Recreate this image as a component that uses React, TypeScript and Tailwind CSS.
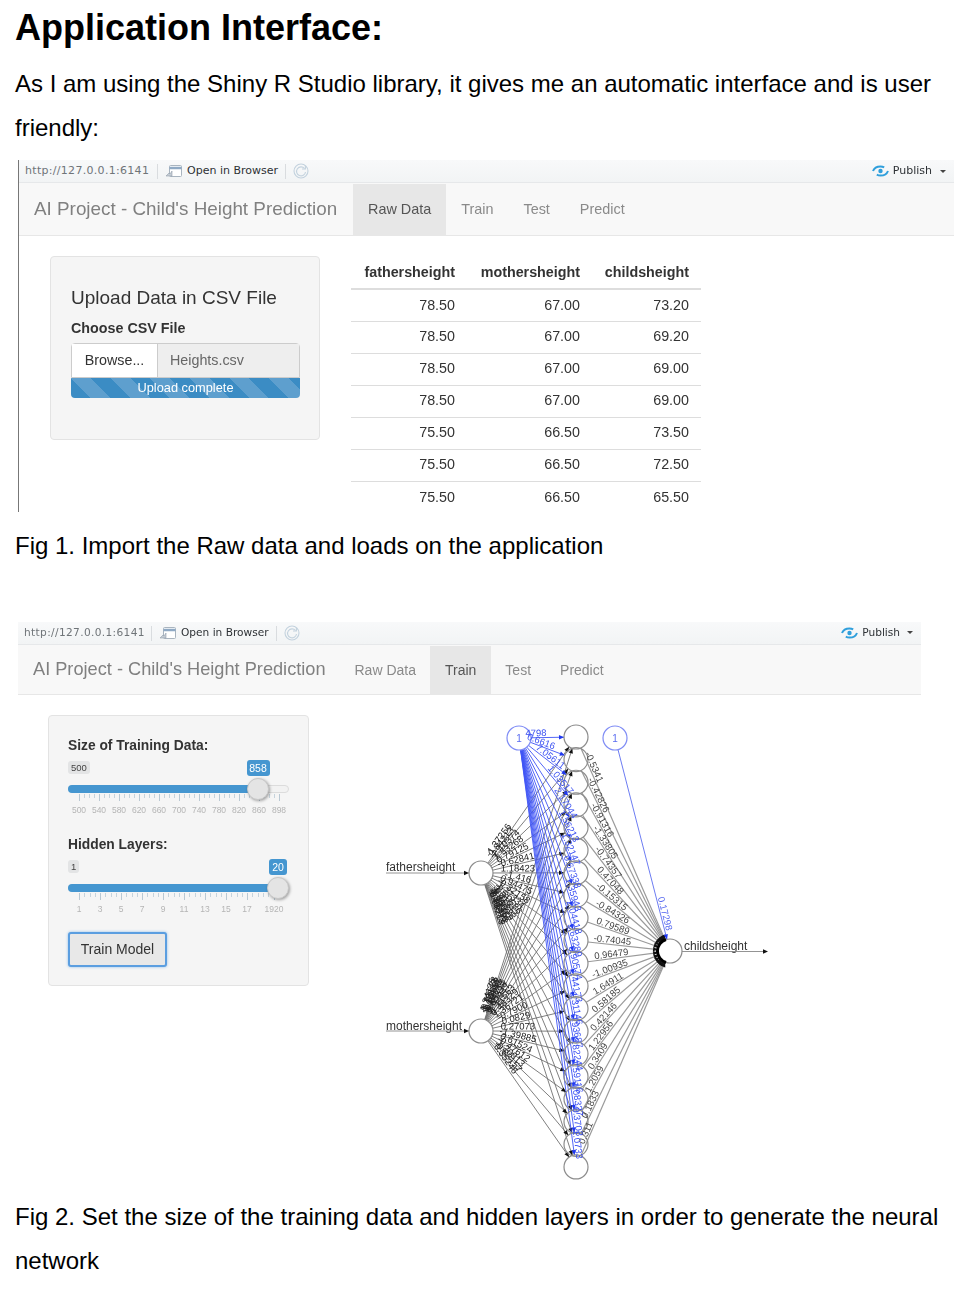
import React from 'react';

const tableRows = [
  ['78.50', '67.00', '73.20'],
  ['78.50', '67.00', '69.20'],
  ['78.50', '67.00', '69.00'],
  ['78.50', '67.00', '69.00'],
  ['75.50', '66.50', '73.50'],
  ['75.50', '66.50', '72.50'],
  ['75.50', '66.50', '65.50'],
];

function OpenIcon() {
  return (
    <svg width="18" height="14" viewBox="0 0 18 14" fill="none">
      <rect x="4.5" y="1.5" width="12" height="11" rx="1" fill="#fff" stroke="#a9b4bf" />
      <path d="M4.5 4h12" stroke="#8fa9c4" strokeWidth="2.5" />
      <path d="M1 12l3-3 1 1 2-3v5z" fill="#c4ccd4" stroke="#94a0ac" strokeWidth="0.6" />
    </svg>
  );
}

function RefreshIcon() {
  return (
    <svg width="16" height="16" viewBox="0 0 16 16" fill="none" stroke="#c3d2de" strokeWidth="1.1">
      <circle cx="8" cy="8" r="7" />
      <path d="M11.5 5.5A4.5 4.5 0 1 0 12.5 9" />
      <path d="M9 6h3.4V2.8" />
    </svg>
  );
}

function PublishIcon() {
  return (
    <svg width="17" height="12" viewBox="0 0 17 12" fill="none">
      <path d="M1 6c1-2.6 3.4-4.6 7.4-4.6 1.6 0 2.8.4 3.800 1" stroke="#2f9fdc" strokeWidth="2" />
      <path d="M16 6c-1 2.6-3.400 4.600-7.400 4.600-1.600 0-2.800-.4-3.800-1" stroke="#2f9fdc" strokeWidth="2" />
      <circle cx="8.500" cy="6" r="2.200" fill="#2f9fdc" />
    </svg>
  );
}

function Toolbar({ first }: { first: boolean }) {
  return (
    <div className={`flex h-[23px] items-center border-b border-[#e6e8ea] bg-gradient-to-b from-[#f8f9fa] to-[#f2f4f5] font-['DejaVu_Sans',sans-serif] whitespace-nowrap ${first ? 'pl-[6px] pr-[8px] text-[11px]' : 'pl-[6px] pr-[8px] text-[10.600px]'}`}>
      <span className={`text-[#6f7478] ${first ? 'w-[125px] tracking-[0.3px]' : 'w-[120px] tracking-[0.35px]'}`}>http://127.0.0.1:6141</span>
      <span className="ml-[7px] h-[15px] w-px bg-[#d9dcdf]" />
      <span className="ml-[7px]"><OpenIcon /></span>
      <span className={`ml-[4px] text-[#2d3135] ${first ? 'w-[90px]' : 'w-[87px]'}`}>Open in Browser</span>
      <span className="ml-[8px] h-[15px] w-px bg-[#d9dcdf]" />
      <span className="ml-[7px]"><RefreshIcon /></span>
      <div className="ml-auto flex items-center gap-1 text-[#2d3135]">
        <PublishIcon />
        <span>Publish</span>
        <span className={`h-0 w-0 border-x-[3px] border-t-[3px] border-x-transparent border-t-[#444] ${first ? 'ml-[4px]' : 'ml-[3px]'}`} />
      </div>
    </div>
  );
}

function NavBar({ active, first }: { active: string; first: boolean }) {
  const tabs = ['Raw Data', 'Train', 'Test', 'Predict'];
  return (
    <div className={`flex border-b border-[#e7e7e7] bg-[#f8f8f8] pt-px text-[#8a8a8a] ${first ? 'h-[53px] pl-[15px]' : 'h-[50px] pl-[15px]'}`}>
      <span className={`flex items-center whitespace-nowrap text-[#808080] ${first ? 'mr-[16px] w-[303px] text-[18.850px]' : 'mr-[15px] w-[292px] text-[18.200px]'}`}>AI Project - Child's Height Prediction</span>
      {tabs.map((tab) => (
        <span
          key={tab}
          className={`flex items-center ${first ? 'px-[15px] text-[14.400px]' : 'px-[14.500px] text-[14px]'} ${tab === active ? 'bg-[#e7e7e7] text-[#555]' : ''}`}
        >
          {tab}
        </span>
      ))}
    </div>
  );
}

function UploadPanel() {
  return (
    <div className="h-[184px] w-[270px] rounded border border-[#e3e3e3] bg-[#f5f5f5] px-5 pt-[28px] text-[#333]">
      <div className="text-[19px] leading-[26px]">Upload Data in CSV File</div>
      <div className="mt-[7px] text-[14.300px] leading-[20px] font-bold">Choose CSV File</div>
      <div className="mt-[5px] flex h-[35px] w-[229px] rounded-t border border-[#ccc] text-[14.300px]">
        <span className="flex w-[86px] items-center justify-center border-r border-[#ccc] bg-white">Browse...</span>
        <span className="flex flex-1 items-center bg-[#eee] pl-3 text-[#666]">Heights.csv</span>
      </div>
      <div className="flex h-[20px] w-[229px] items-center justify-center rounded-b bg-[repeating-linear-gradient(45deg,#3b8cc4_0_14px,#5e9fce_14px_28px)] text-[12.800px] text-white">
        Upload complete
      </div>
    </div>
  );
}

function DataTable() {
  return (
    <table className="ml-[31px] mt-[1px] h-fit w-[350px] border-collapse text-[14.300px] text-[#333]">
      <thead>
        <tr className="h-[32px] border-b-2 border-[#ddd]">
          <th className="w-[104px] pr-0 text-right font-bold">fathersheight</th>
          <th className="w-[125px] text-right font-bold">mothersheight</th>
          <th className="w-[109px] text-right font-bold">childsheight</th>
          <th />
        </tr>
      </thead>
      <tbody>
        {tableRows.map((row, i) => (
          <tr key={i} className={`h-[32px] ${i < tableRows.length - 1 ? 'border-b border-[#ddd]' : ''}`}>
            {row.map((cell, j) => (
              <td key={j} className="text-right">{cell}</td>
            ))}
            <td />
          </tr>
        ))}
      </tbody>
    </table>
  );
}

function Slider({ label, min, value, thumbX, labels, minor, valueW }: {
  label: string;
  min: string;
  value: string;
  thumbX: number;
  labels: { t: string; x: number }[];
  minor: number[];
  valueW: number;
}) {
  return (
    <div>
      <div className="text-[13.800px] leading-[20px] font-bold text-[#333]">{label}</div>
      <div className="relative mt-[3px] h-[72px] w-[221px]">
        <span className="absolute left-0 top-[2px] rounded-[3px] bg-[#e3e4e5] px-[3px] text-[9.500px] leading-[13px] text-[#444]">{min}</span>
        <span
          className="absolute top-[1px] rounded-[3px] bg-[#4596d0] text-center text-[10.500px] leading-[16px] text-white"
          style={{ left: thumbX - valueW / 2, width: valueW }}
        >
          {value}
        </span>
        <div className="absolute left-0 top-[26px] h-[8px] w-full rounded-full border border-[#dcdcdc] bg-[#f2f2f2]" />
        <div className="absolute left-0 top-[26px] h-[8px] rounded-l-full bg-[#4596d0]" style={{ width: thumbX }} />
        {minor.map((x, i) => (
          <span key={i} className="absolute top-[35px] h-[4px] w-px bg-[#c6d3dc]" style={{ left: x }} />
        ))}
        {labels.map((l) => (
          <React.Fragment key={l.t}>
            <span className="absolute top-[35px] h-[7px] w-px bg-[#b9c8d3]" style={{ left: l.x }} />
            <span
              className="absolute top-[46px] w-[30px] text-center text-[8.500px] leading-[11px] text-[#b5b5b5]"
              style={{ left: l.x - 15 }}
            >
              {l.t}
            </span>
          </React.Fragment>
        ))}
        <div
          className="absolute top-[19px] h-[22px] w-[22px] rounded-full border border-[#c8c8c8] bg-[#e4e4e4] shadow-[1px_1px_3px_rgba(0,0,0,0.35)]"
          style={{ left: thumbX - 11 }}
        />
      </div>
    </div>
  );
}

function TrainPanel() {
  const size = [500, 540, 580, 620, 660, 700, 740, 780, 820, 860].map((v, i) => ({ t: String(v), x: 11 + i * 20 }));
  const layers = [1, 3, 5, 7, 9, 11, 13, 15, 17].map((v, i) => ({ t: String(v), x: 11 + i * 21 }));
  const sizeMinor = Array.from({ length: 41 }, (_, i) => 11 + i * 5);
  const layerMinor = Array.from({ length: 39 }, (_, i) => 11 + i * 5.25);
  return (
    <div className="h-[271px] w-[261px] rounded border border-[#e3e3e3] bg-[#f5f5f5] px-[19px] pt-[20px]">
      <Slider
        label="Size of Training Data:"
        min="500"
        value="858"
        thumbX={190}
        valueW={23}
        labels={[...size, { t: '898', x: 211 }]}
        minor={sizeMinor}
      />
      <div className="mt-[4px]">
        <Slider
          label="Hidden Layers:"
          min="1"
          value="20"
          thumbX={210}
          valueW={18}
          labels={[...layers, { t: '1920', x: 206 }]}
          minor={layerMinor}
        />
      </div>
      <button className="mt-[2px] h-[35px] w-[99px] rounded-[3px] border-2 border-[#5b9ee0] bg-[#e8e8e8] text-[14px] text-[#333] shadow-[0_0_3px_#8fbdea]">
        Train Model
      </button>
    </div>
  );
}

// network plot, drawn in page coordinates through the viewBox
const HIDDEN_X = 576;
const hiddenY = Array.from({ length: 20 }, (_, i) => 737 + i * 22.63);
const OUT = { x: 670, y: 951 };
const FATHER = { x: 481, y: 873 };
const MOTHER = { x: 481, y: 1031 };
const BIAS1 = { x: 519, y: 738 };
const BIAS2 = { x: 615, y: 738 };
const R = 12;

const outLabels = ['-0.5341', '-0.42826', '-0.91316', '-1.33805', '-0.74357', '0.47048', '-0.15315', '-0.84326', '0.79589', '-0.74045', '0.96479', '-1.00935', '1.64911', '0.58185', '0.42146', '1.22956', '0.3409', '1.2059', '0.1833', '0.311'];
const blueLabels = ['4798', '0.6616', '7.05611', '1.03517', '2.17044', '1.56213', '1.32147', '0.67338', '1.35943', '2.04418', '1.63289', '0.90574', '1.44173', '1.31146', '0.93687', '0.82244', '1.59116', '1.08327', '0.3703', '1.0733'];
const fatherLabels = ['-1.37256', '0.84213', '-2.10374', '1.53268', '0.79125', '-0.62841', '1.18423', '-1.416', '0.94475', '-0.32158', '1.27334', '-2.30586', '1.01942', '-0.75833', '1.66091', '-1.28457', '0.52316', '-0.91472', '1.43675', '-0.66219'];
const motherLabels = ['1.24175', '-0.93628', '0.72184', '-1.53092', '1.10746', '-0.84213', '0.65398', '1.92047', '-1.11563', '0.48329', '1.36721', '-0.7900', '0.0829', '0.27073', '-1.39885', '0.61524', '-0.47612', '1.20913', '-0.83157', '0.35246'];

function arrow(x1: number, y1: number, x2: number, y2: number, fill: string, key: string) {
  const a = Math.atan2(y2 - y1, x2 - x1);
  const l = 5;
  const w = 2.2;
  const bx = x2 - l * Math.cos(a);
  const by = y2 - l * Math.sin(a);
  const pts = `${x2},${y2} ${bx - w * Math.sin(a)},${by + w * Math.cos(a)} ${bx + w * Math.sin(a)},${by - w * Math.cos(a)}`;
  return <polygon key={key} points={pts} fill={fill} />;
}

function edge(a: { x: number; y: number }, b: { x: number; y: number }, color: string, width: number, head: string, key: string) {
  const d = Math.hypot(b.x - a.x, b.y - a.y);
  const ux = (b.x - a.x) / d;
  const uy = (b.y - a.y) / d;
  const x1 = a.x + ux * R;
  const y1 = a.y + uy * R;
  const x2 = b.x - ux * R;
  const y2 = b.y - uy * R;
  return (
    <g key={key}>
      <line x1={x1} y1={y1} x2={x2} y2={y2} stroke={color} strokeWidth={width} />
      {arrow(x1, y1, x2, y2, head, 'h')}
    </g>
  );
}

function edgeLabel(a: { x: number; y: number }, b: { x: number; y: number }, frac: number, text: string, fill: string, key: string) {
  const x = a.x + (b.x - a.x) * frac;
  const y = a.y + (b.y - a.y) * frac;
  let deg = (Math.atan2(b.y - a.y, b.x - a.x) * 180) / Math.PI;
  if (deg > 90) deg -= 180;
  return (
    <text key={key} x={x} y={y - 1.5} transform={`rotate(${deg} ${x} ${y})`} textAnchor="middle" fontSize="9.500" fill={fill}>
      {text}
    </text>
  );
}

function NetworkPlot() {
  return (
    <svg width="410" height="475" viewBox="370 715 410 475" className="ml-[61px] blur-[0.3px] font-['Liberation_Sans',sans-serif]">
      {hiddenY.map((y, i) => edge(FATHER, { x: HIDDEN_X, y }, '#707070', 0.9, '#111', `f${i}`))}
      {hiddenY.map((y, i) => edge(MOTHER, { x: HIDDEN_X, y }, '#707070', 0.9, '#111', `m${i}`))}
      {hiddenY.map((y, i) => edge({ x: HIDDEN_X, y }, OUT, '#9a9a9a', 1.2, '#111', `o${i}`))}
      {hiddenY.map((y, i) => edge(BIAS1, { x: HIDDEN_X, y }, '#3f55f5', 0.9, '#1f38f0', `b${i}`))}
      {edge(BIAS2, OUT, '#6c7cf2', 1, '#1f38f0', 'b2')}
      {hiddenY.map((y, i) => (
        <circle key={i} cx={HIDDEN_X} cy={y} r={R} fill="none" stroke="#8c8c8c" strokeWidth="1.200" />
      ))}
      <circle cx={FATHER.x} cy={FATHER.y} r={R} fill="#fff" stroke="#8c8c8c" strokeWidth="1.200" />
      <circle cx={MOTHER.x} cy={MOTHER.y} r={R} fill="#fff" stroke="#8c8c8c" strokeWidth="1.200" />
      <circle cx={OUT.x} cy={OUT.y} r={R} fill="#fff" stroke="#8c8c8c" strokeWidth="1.200" />
      <path d="M666 939.500A12 12 0 0 0 666 962.500" fill="none" stroke="#000" strokeWidth="3" />
      <circle cx={BIAS1.x} cy={BIAS1.y} r={R} fill="#fff" stroke="#7f8cf5" strokeWidth="1.200" />
      <circle cx={BIAS2.x} cy={BIAS2.y} r={R} fill="#fff" stroke="#7f8cf5" strokeWidth="1.200" />
      <text x={BIAS1.x} y={BIAS1.y + 3.500} textAnchor="middle" fontSize="10" fill="#5a6cf0">1</text>
      <text x={BIAS2.x} y={BIAS2.y + 3.500} textAnchor="middle" fontSize="10" fill="#5a6cf0">1</text>

      {hiddenY.map((y, i) => {
        const d = Math.abs(i - 9.5) / 9.5;
        const x = 590 + 22 * (1 - d * d);
        return edgeLabel({ x: HIDDEN_X, y }, OUT, (x - HIDDEN_X) / (OUT.x - HIDDEN_X), outLabels[i], '#444', `ol${i}`);
      })}
      {hiddenY.map((y, i) => {
        const frac = i === 0 ? 0.3 : i === 1 ? 0.36 : 1 - 22 / (y - BIAS1.y);
        return edgeLabel(BIAS1, { x: HIDDEN_X, y }, frac, blueLabels[i], '#3a50f2', `bl${i}`);
      })}
      {hiddenY.map((y, i) => {
        const frac = 37 / Math.hypot(HIDDEN_X - FATHER.x, y - FATHER.y);
        return edgeLabel(FATHER, { x: HIDDEN_X, y }, frac, fatherLabels[i], '#222', `fl${i}`);
      })}
      {hiddenY.map((y, i) => {
        const frac = 37 / Math.hypot(HIDDEN_X - MOTHER.x, y - MOTHER.y);
        return edgeLabel(MOTHER, { x: HIDDEN_X, y }, frac, motherLabels[i], '#222', `ml${i}`);
      })}
      {edgeLabel(BIAS2, OUT, 0.83, '0.17298', '#5a6cf0', 'bl2')}

      <text x="386" y="871" fontSize="12" fill="#333">fathersheight</text>
      <line x1="386" y1="873" x2="464" y2="873" stroke="#888" strokeWidth="0.900" />
      {arrow(386, 873, 469, 873, '#111', 'fa')}
      <text x="386" y="1030" fontSize="12" fill="#333">mothersheight</text>
      <line x1="386" y1="1031" x2="464" y2="1031" stroke="#888" strokeWidth="0.900" />
      {arrow(386, 1031, 469, 1031, '#111', 'ma')}
      <text x="684" y="950" fontSize="12" fill="#333">childsheight</text>
      <line x1="682" y1="951.500" x2="764" y2="951.500" stroke="#888" strokeWidth="0.900" />
      {arrow(682, 951.500, 768, 951.500, '#111', 'ca')}
    </svg>
  );
}

export default function App() {
  return (
    <div className="h-[1290px] w-[964px] overflow-hidden bg-white font-['Liberation_Sans',Arial,sans-serif] text-black">
      <h1 className="pl-[15px] pt-[7px] text-[36px] leading-[42px] font-bold">Application Interface:</h1>
      <p className="mt-[13px] w-[945px] pl-[15px] text-[24px] leading-[44px]">
        As I am using the Shiny R Studio library, it gives me an automatic interface and is user friendly:
      </p>

      {/* Fig 1 */}
      <div className="ml-[18px] mt-[10px] h-[352px] w-[936px] border-l border-[#777] blur-[0.4px]">
        <Toolbar first />
        <NavBar active="Raw Data" first />
        <div className="flex pl-[31px] pt-[20px]">
          <UploadPanel />
          <DataTable />
        </div>
      </div>
      <p className="mt-[12px] pl-[15px] text-[24px] leading-[44px]">Fig 1. Import the Raw data and loads on the application</p>

      {/* Fig 2 */}
      <div className="ml-[18px] mt-[54px] w-[903px] blur-[0.4px]">
        <Toolbar first={false} />
        <NavBar active="Train" first={false} />
      </div>
      <div className="ml-[48px] mt-[20px] flex h-[475px] items-start">
        <div className="blur-[0.4px]">
          <TrainPanel />
        </div>
        <NetworkPlot />
      </div>
      <p className="mt-[5px] w-[950px] pl-[15px] text-[24px] leading-[44px]">
        Fig 2. Set the size of the training data and hidden layers in order to generate the neural network
      </p>
    </div>
  );
}
